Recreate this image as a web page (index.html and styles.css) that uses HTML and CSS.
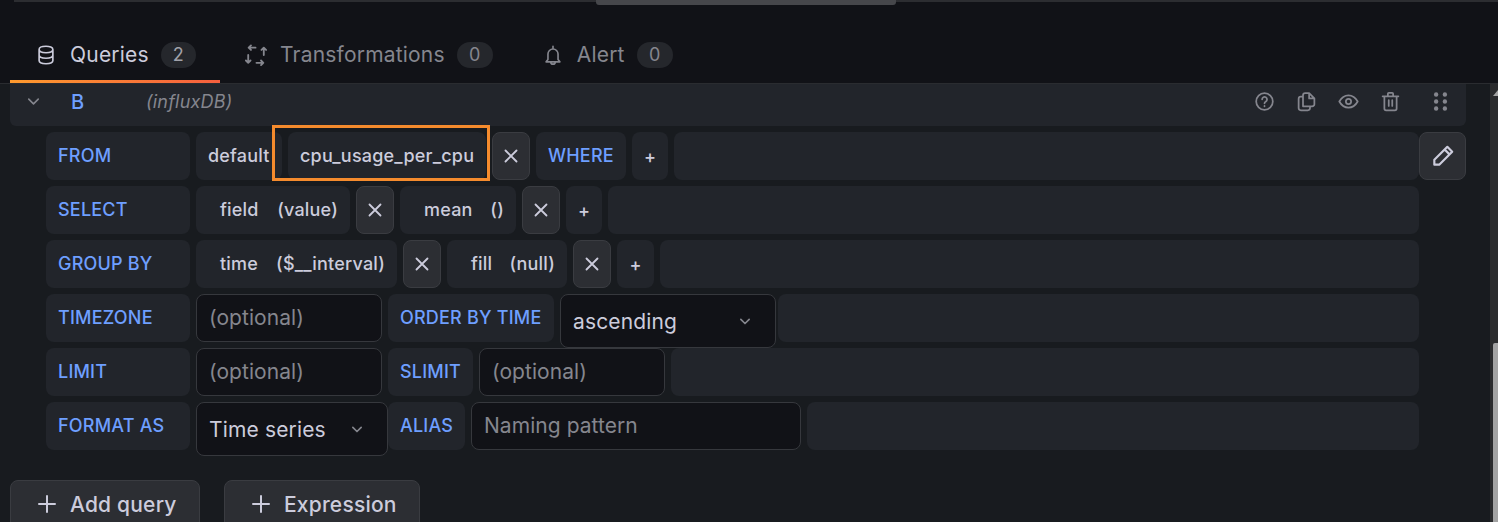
FILE: index.html
```html
<!DOCTYPE html>
<html lang="en">
<head>
<meta charset="utf-8">
<title>Query editor</title>
<link rel="stylesheet" href="styles.css">
</head>
<body>
<div class="hscroll"><div class="hscroll-track"></div><div class="hscroll-thumb"></div><div class="hscroll-rest"></div></div>
<nav class="tabs">
  <a class="tab active">
    <svg class="ti" viewBox="0 0 24 24"><path d="M12 2.500c-4 0-7.500 1.200-7.500 3.500v12c0 2.300 3.500 3.500 7.500 3.500s7.500-1.200 7.500-3.500V6c0-2.300-3.500-3.500-7.500-3.500zM4.500 6c0 2.300 3.500 3.500 7.500 3.500s7.500-1.200 7.500-3.500M4.500 12c0 2.300 3.500 3.500 7.500 3.500s7.500-1.200 7.500-3.500"/></svg>
    <span>Queries</span><b class="count">2</b>
  </a>
  <a class="tab">
    <svg class="ti tf" viewBox="0 0 24 24"><path d="M11.500 4H4M6.500 1.500L4 4l2.500 2.500M20.500 12V4M18 6.500L20.500 4 23 6.500M12.500 20.500H20M17.500 18l2.500 2.500-2.500 2.500M3.500 12v8.500M1 18l2.500 2.500L6 18"/></svg>
    <span>Transformations</span><b class="count">0</b>
  </a>
  <a class="tab">
    <svg class="ti" viewBox="0 0 24 24"><path d="M12 2.500v2.500M6.500 17v-6a5.500 5.500 0 0 1 11 0v6l2 2.500h-15zM9.500 19.500a2.500 2.500 0 0 0 5 0"/></svg>
    <span>Alert</span><b class="count">0</b>
  </a>
</nav>
<main class="editor">
  <header class="qhead">
    <svg class="chev" viewBox="0 0 24 24"><path d="M6 9l6 6 6-6"/></svg>
    <span class="qletter">B</span>
    <em class="qds">(influxDB)</em>
    <div class="qactions">
      <svg class="ai" viewBox="0 0 24 24"><circle cx="12" cy="12" r="9.500"/><path d="M9.300 9.500a2.800 2.800 0 1 1 4.300 2.400c-1 .6-1.600 1.200-1.600 2.100M12 17v.5"/></svg>
      <svg class="ai" viewBox="0 0 24 24"><path d="M8 17.500V5a2.500 2.500 0 0 1 2.500-2.500H15l6 6V15a2.500 2.500 0 0 1-2.500 2.500zM15 2.500V8.500h6M8 6.500H5.500A2.500 2.500 0 0 0 3 9v10.500A2.500 2.500 0 0 0 5.500 22h8a2.500 2.500 0 0 0 2.500-2.500v-2"/></svg>
      <svg class="ai" viewBox="0 0 24 24"><path d="M1.500 12C4 7.500 7.800 5 12 5s8 2.500 10.500 7c-2.500 4.500-6.300 7-10.500 7S4 16.500 1.500 12z"/><circle cx="12" cy="12" r="3"/></svg>
      <svg class="ai" viewBox="0 0 24 24"><path d="M3 6h18M9 6V3a1 1 0 0 1 1-1h4a1 1 0 0 1 1 1v3M5 6v14a2 2 0 0 0 2 2h10a2 2 0 0 0 2-2V6M10 10.500V17M14 10.500V17"/></svg>
      <svg class="grip" viewBox="0 0 16 24"><circle cx="3" cy="4" r="2.500"/><circle cx="13" cy="4" r="2.500"/><circle cx="3" cy="12" r="2.500"/><circle cx="13" cy="12" r="2.500"/><circle cx="3" cy="20" r="2.500"/><circle cx="13" cy="20" r="2.500"/></svg>
    </div>
  </header>

  <section class="rows">
    <div class="row">
      <span class="seg key w144">FROM</span>
      <span class="seg val default">default</span>
      <span class="seg val meas">cpu_usage_per_cpu<i class="hl"></i></span>
      <button class="x"><svg viewBox="0 0 24 24"><path d="M6 6l12 12M18 6L6 18"/></svg></button>
      <span class="seg key where">WHERE</span>
      <span class="seg plus p38">+</span>
      <span class="seg fill"></span>
      <button class="edit"><svg viewBox="0 0 24 24"><path d="M4 20v-4.500L16 3.500 20.500 8 8.500 20zM13.500 6l4.500 4.500"/></svg></button>
    </div>
    <div class="row">
      <span class="seg key w144">SELECT</span>
      <span class="seg val pair w154"><span>field</span><span>(value)</span></span>
      <button class="x"><svg viewBox="0 0 24 24"><path d="M6 6l12 12M18 6L6 18"/></svg></button>
      <span class="seg val pair w116"><span>mean</span><span>()</span></span>
      <button class="x"><svg viewBox="0 0 24 24"><path d="M6 6l12 12M18 6L6 18"/></svg></button>
      <span class="seg plus p36">+</span>
      <span class="seg fill"></span>
    </div>
    <div class="row">
      <span class="seg key w144">GROUP BY</span>
      <span class="seg val pair w201"><span>time</span><span>($__interval)</span></span>
      <button class="x"><svg viewBox="0 0 24 24"><path d="M6 6l12 12M18 6L6 18"/></svg></button>
      <span class="seg val pair w120"><span>fill</span><span>(null)</span></span>
      <button class="x"><svg viewBox="0 0 24 24"><path d="M6 6l12 12M18 6L6 18"/></svg></button>
      <span class="seg plus p37">+</span>
      <span class="seg fill"></span>
    </div>
    <div class="row">
      <span class="seg key w144">TIMEZONE</span>
      <span class="inp w186 ph">(optional)</span>
      <span class="seg key w166">ORDER BY TIME</span>
      <span class="select w216"><span>ascending</span><svg class="chev2" viewBox="0 0 24 24"><path d="M7 10l5 5 5-5"/></svg></span>
      <span class="seg fill"></span>
    </div>
    <div class="row">
      <span class="seg key w144">LIMIT</span>
      <span class="inp w186 ph">(optional)</span>
      <span class="seg key w85">SLIMIT</span>
      <span class="inp w186 ph">(optional)</span>
      <span class="seg fill"></span>
    </div>
    <div class="row">
      <span class="seg key w144">FORMAT AS</span>
      <span class="select w192"><span>Time series</span><svg class="chev2" viewBox="0 0 24 24"><path d="M7 10l5 5 5-5"/></svg></span>
      <span class="seg key w77">ALIAS</span>
      <span class="inp w330 ph">Naming pattern</span>
      <span class="seg fill"></span>
    </div>
  </section>

  <div class="actions">
    <button class="btn"><svg viewBox="0 0 24 24"><path d="M12 4v16M4 12h16"/></svg>Add query</button>
    <button class="btn"><svg viewBox="0 0 24 24"><path d="M12 4v16M4 12h16"/></svg>Expression</button>
  </div>
</main>
<div class="vscroll"><div class="varrow"></div><div class="vthumb"></div></div>
</body>
</html>
```
FILE: styles.css
```css
* { box-sizing: border-box; }
html, body { margin: 0; height: 522px; overflow: hidden; }
body { background: #181b1f; color: #ccccdc; font-family: Inter, "Liberation Sans", sans-serif; font-size: 16px; letter-spacing: 0.2px; position: relative; }
svg { fill: none; stroke: currentColor; stroke-linecap: round; stroke-linejoin: round; stroke-width: 2; }

.hscroll { height: 6px; background: #111217; display: flex; padding-left: 14px; }
.hscroll-track { width: 582px; height: 2px; border-bottom: 2px solid #2c2d31; }
.hscroll-thumb { width: 300px; height: 5px; background: #46474b; border-radius: 0 0 3px 3px; }
.hscroll-rest { flex: 1; height: 2px; border-bottom: 2px solid #2c2d31; }

.tabs { height: 78px; background: #111217; border-bottom: 1px solid #2a2c30; display: flex; padding: 24px 0 0 10px; }
.tab { height: 53px; display: flex; align-items: center; padding: 0 24px 4px 25px; color: #85868e; font-size: 21px; position: relative; }
.tab.active { color: #ccccdc; width: 210px; }
.tab.active::after { content: ""; position: absolute; left: 0; right: 0; bottom: 0; height: 3px; background: linear-gradient(90deg, #ff9a2e, #f55f3e); }
.ti { width: 22px; height: 22px; margin-right: 13px; stroke-width: 1.800; flex: none; }
.tf { stroke-width: 2; }
.count { font-weight: 400; font-size: 18px; color: #85868e; background: #25272c; width: 36px; height: 26px; line-height: 26px; border-radius: 13px; text-align: center; margin-left: 12px; }
.active .count { color: #a0a1a9; }

.editor { padding-left: 10px; }
.qhead { width: 1456px; height: 42px; background: #22252b; border-radius: 0 0 6px 6px; display: flex; align-items: center; padding: 0 0 7px 14px; }
.chev { width: 19px; height: 19px; color: #85868e; }
.qletter { color: #6e9fff; font-size: 20px; font-weight: 500; margin-left: 28px; width: 75px; }
.qds { color: #85868e; font-size: 18px; }
.qactions { margin-left: auto; display: flex; align-items: center; color: #85868e; padding-right: 18px; }
.ai { width: 21px; height: 21px; margin-right: 21px; }
.grip { width: 15px; height: 21px; margin-left: 11px; fill: currentColor; stroke: none; }

.rows { display: flex; flex-direction: column; gap: 6px; padding: 6px 0 0 36px; }
.row { display: flex; gap: 6px; width: 1373px; height: 48px; align-items: flex-start; position: relative; }
.seg { height: 48px; background: #22252b; border-radius: 8px; display: flex; align-items: center; font-size: 18px; flex: none; padding-bottom: 2px; }
.key { color: #6e9fff; font-weight: 500; padding-left: 12px; }
.val { color: #ccccdc; font-weight: 500; }
.w144 { width: 144px; } .w166 { width: 166px; } .w85 { width: 85px; } .w77 { width: 77px; }
.where { width: 90px; }
.default { width: 86px; padding-left: 12px; white-space: nowrap; }
.meas { width: 198px; padding-left: 12px; position: relative; }
.hl { position: absolute; left: -16px; top: -7px; width: 218px; height: 56px; border: 3px solid #f58b2d; pointer-events: none; }
.pair { justify-content: space-between; padding: 0 12px 2px 24px; }
.w154 { width: 154px; } .w116 { width: 116px; } .w201 { width: 201px; } .w120 { width: 120px; }
.plus { justify-content: center; color: #ccccdc; font-weight: 500; padding-bottom: 0; }
.p38, .p36 { width: 36px; } .p37 { width: 37px; }
.fill { flex: 1; }
.x { width: 38px; height: 48px; flex: none; padding: 0; background: #2c2e33; border: 1px solid #3a3c41; border-radius: 8px; color: #ccccdc; display: flex; align-items: center; justify-content: center; }
.x svg { width: 22px; height: 22px; }
.edit { position: absolute; left: 1373px; top: 0; width: 47px; height: 48px; padding: 0; background: #2c2e33; border: 1px solid #3a3c41; border-radius: 8px; color: #ccccdc; display: flex; align-items: center; justify-content: center; }
.edit svg { width: 26px; height: 26px; }
.inp, .select { height: 48px; flex: none; background: #111217; border: 1px solid #36383d; border-radius: 8px; display: flex; align-items: center; font-size: 21px; }
.inp { padding: 0 0 2px 12px; }
.ph { color: #85868e; letter-spacing: 0.05px; }
.w186 { width: 186px; } .w330 { width: 330px; }
.select { height: 54px; color: #ccccdc; padding: 0 20px 0 12px; justify-content: space-between; position: relative; z-index: 1; letter-spacing: 0.15px; }
.w216 { width: 216px; margin-right: -4px; }
.w192 { width: 192px; margin-right: -6px; }
.chev2 { width: 20px; height: 20px; color: #85868e; }

.actions { display: flex; gap: 24px; margin-top: 30px; }
.btn { width: 190px; height: 52px; background: #2c2e33; border: 1px solid #3a3c41; border-radius: 8px 8px 0 0; color: #ccccdc; font: 500 21px Inter, "Liberation Sans", sans-serif; letter-spacing: 0.2px; display: flex; align-items: center; padding: 0 0 4px 24px; }
.btn + .btn { width: 196px; }
.btn svg { width: 24px; height: 24px; margin-right: 11px; }

.vscroll { position: absolute; right: 0; top: 84px; bottom: 0; width: 8px; background: #2a2b2d; }
.varrow { position: absolute; right: 0; top: 6px; border-left: 5px solid transparent; border-bottom: 6px solid #a3a3a3; }
.vthumb { position: absolute; right: 0; top: 259px; bottom: 0; width: 5px; background: #a3a3a3; border-radius: 2px 0 0 0; }
```
